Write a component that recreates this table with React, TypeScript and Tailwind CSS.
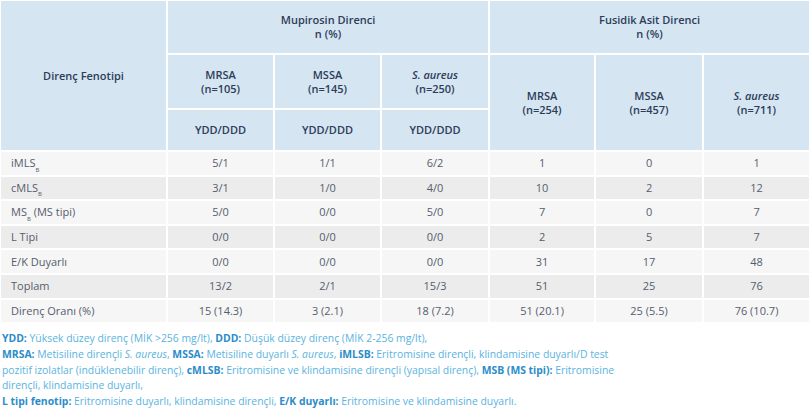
import React from "react";

const sub = "text-[6px] align-[-3px]";
const rows: { label: React.ReactNode; v: string[] }[] = [
  { label: <>iMLS<sub className={sub}>B</sub></>, v: ["5/1", "1/1", "6/2", "1", "0", "1"] },
  { label: <>cMLS<sub className={sub}>B</sub></>, v: ["3/1", "1/0", "4/0", "10", "2", "12"] },
  { label: <>MS<sub className={sub}>B</sub> (MS tipi)</>, v: ["5/0", "0/0", "5/0", "7", "0", "7"] },
  { label: "L Tipi", v: ["0/0", "0/0", "0/0", "2", "5", "7"] },
  { label: "E/K Duyarlı", v: ["0/0", "0/0", "0/0", "31", "17", "48"] },
  { label: "Toplam", v: ["13/2", "2/1", "15/3", "51", "25", "76"] },
  { label: "Direnç Oranı (%)", v: ["15 (14.3)", "3 (2.1)", "18 (7.2)", "51 (20.1)", "25 (5.5)", "76 (10.7)"] },
];

const th = "border-2 border-white bg-[#d5e5f2] text-[#2d3c58] font-semibold text-center align-middle leading-[14px]";
const bl = "font-bold text-[#2b8cc9]";

export default function App() {
  return (
    <div className="w-[810px] h-[412px] bg-white overflow-hidden" style={{ fontFamily: '"Open Sans", sans-serif' }}>
      <table className="w-[810px] border-collapse table-fixed text-[11px] -mt-px -ml-px">
        <colgroup>
          <col className="w-[167px]" />
          <col className="w-[107px]" />
          <col className="w-[107px]" />
          <col className="w-[108px]" />
          <col className="w-[106px]" />
          <col className="w-[108px]" />
          <col className="w-[107px]" />
        </colgroup>
        <thead>
          <tr className="h-[54px]">
            <th rowSpan={3} className={th}>Direnç Fenotipi</th>
            <th colSpan={3} className={th}>Mupirosin Direnci<br />n (%)</th>
            <th colSpan={3} className={th}>Fusidik Asit Direnci<br />n (%)</th>
          </tr>
          <tr className="h-[55px]">
            <th className={th}>MRSA<br />(n=105)</th>
            <th className={th}>MSSA<br />(n=145)</th>
            <th className={th}><i>S. aureus</i><br />(n=250)</th>
            <th rowSpan={2} className={th}>MRSA<br />(n=254)</th>
            <th rowSpan={2} className={th}>MSSA<br />(n=457)</th>
            <th rowSpan={2} className={th}><i>S. aureus</i><br />(n=711)</th>
          </tr>
          <tr className="h-[42px]">
            <th className={th}>YDD/DDD</th>
            <th className={th}>YDD/DDD</th>
            <th className={th}>YDD/DDD</th>
          </tr>
        </thead>
        <tbody>
          {rows.map((r, i) => (
            <tr key={i} className={`h-[24.6px] ${i % 2 === 0 ? "bg-[#f6f6f6]" : "bg-[#ececec]"}`}>
              <td className="border-2 border-white text-[#555d6d] pl-[10px] leading-[14px]">{r.label}</td>
              {r.v.map((x, j) => (
                <td key={j} className="border-2 border-white text-[#555d6d] text-center leading-[14px]">{x}</td>
              ))}
            </tr>
          ))}
        </tbody>
      </table>
      <div className="mt-[7px] pl-[2px] w-[618px] text-[10.4px] leading-[15.7px] text-[#5ab3e0]">
        <p><b className={bl}>YDD:</b> Yüksek düzey direnç (MİK &gt;256 mg/lt), <b className={bl}>DDD:</b> Düşük düzey direnç (MİK 2-256 mg/lt),</p>
        <p>
          <b className={bl}>MRSA:</b> Metisiline dirençli <i>S. aureus</i>, <b className={bl}>MSSA:</b> Metisiline duyarlı <i>S. aureus</i>, <b className={bl}>iMLSB:</b> Eritromisine dirençli, klindamisine duyarlı/D test pozitif izolatlar (indüklenebilir direnç), <b className={bl}>cMLSB:</b> Eritromisine ve klindamisine dirençli (yapısal direnç), <b className={bl}>MSB (MS tipi):</b> Eritromisine dirençli, klindamisine duyarlı,
        </p>
        <p><b className={bl}>L tipi fenotip:</b> Eritromisine duyarlı, klindamisine dirençli, <b className={bl}>E/K duyarlı:</b> Eritromisine ve klindamisine duyarlı.</p>
      </div>
    </div>
  );
}
